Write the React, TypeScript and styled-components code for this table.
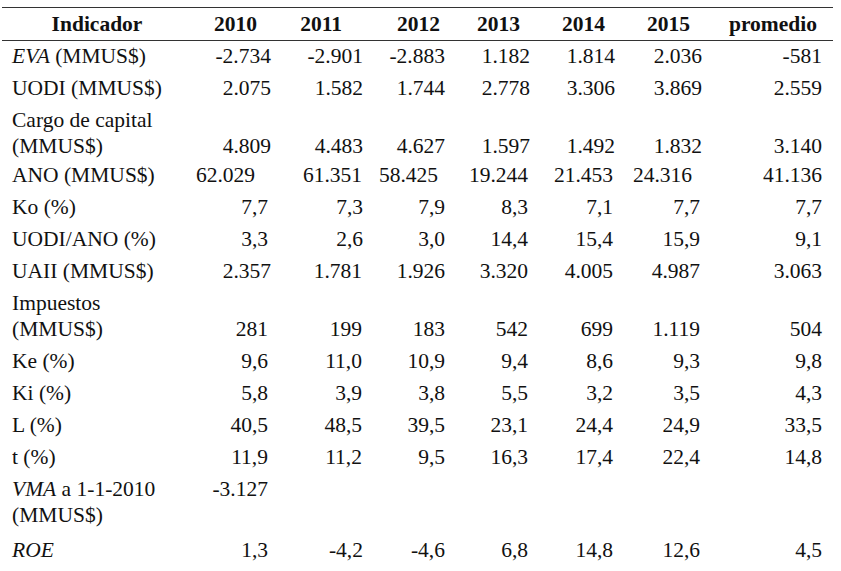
import React, { FC, ReactNode } from 'react';
import styled, { createGlobalStyle } from 'styled-components';

const GlobalStyle = createGlobalStyle`
    html, body {
        margin: 0;
        padding: 0;
        background: #fff;
    }
    body {
        font-family: 'Liberation Serif', 'DejaVu Serif', serif;
        color: #111;
    }
`;

// column widths follow the right edges of the numbers in the source table
const COLUMNS = '190px 79px 92px 82px 85px 85px 87px 131px';

const Table = styled.div`
    width: 831px;
    margin: 7px 0 0 2px;
    font-family: 'Liberation Serif', 'DejaVu Serif', serif;
    font-size: 21.5px;
    line-height: 26px;
`;

const Row = styled.div<{ $pt?: number; $pb?: number; $align?: string }>`
    display: grid;
    grid-template-columns: ${COLUMNS};
    padding: ${(p) => p.$pt ?? 3}px 0 ${(p) => p.$pb ?? 3}px;
    align-items: ${(p) => p.$align ?? 'end'};
`;

const HeadRow = styled(Row)`
    border-top: 1px solid #333;
    border-bottom: 1px solid #333;
    font-weight: bold;
`;

const Label = styled.div`
    padding-left: 10px;
    white-space: nowrap;
`;

const HeadLabel = styled.div`
    text-align: center;
`;

const Cell = styled.div<{ $pad?: number }>`
    text-align: right;
    padding-right: ${(p) => p.$pad ?? 0}px;
    white-space: nowrap;
`;

const Em = styled.i`
    font-style: italic;
`;

type RowData = {
    label: ReactNode;
    values: string[];
    pads?: number[];
    pt?: number;
    pb?: number;
    align?: string;
};

const basePads = [0, 0, 0, 0, 0, 0, 11];

const rows: RowData[] = [
    { label: <><Em>EVA</Em> (MMUS$)</>, values: ['-2.734', '-2.901', '-2.883', '1.182', '1.814', '2.036', '-581'], pt: 2 },
    { label: 'UODI (MMUS$)', values: ['2.075', '1.582', '1.744', '2.778', '3.306', '3.869', '2.559'] },
    { label: <>Cargo de capital<br />(MMUS$)</>, values: ['4.809', '4.483', '4.627', '1.597', '1.492', '1.832', '3.140'], pb: 0 },
    {
        label: 'ANO (MMUS$)',
        values: ['62.029', '61.351', '58.425', '19.244', '21.453', '24.316', '41.136'],
        pads: [16, 1, 7, 2, 2, 10, 11],
    },
    { label: 'Ko (%)', values: ['7,7', '7,3', '7,9', '8,3', '7,1', '7,7', '7,7'], pads: [3, 0, 0, 2, 2, 2, 11] },
    { label: 'UODI/ANO (%)', values: ['3,3', '2,6', '3,0', '14,4', '15,4', '15,9', '9,1'], pads: [3, 0, 0, 2, 2, 2, 11] },
    { label: 'UAII (MMUS$)', values: ['2.357', '1.781', '1.926', '3.320', '4.005', '4.987', '3.063'], pads: [-5, 1, 0, 2, 2, 2, 11] },
    { label: <>Impuestos<br />(MMUS$)</>, values: ['281', '199', '183', '542', '699', '1.119', '504'], pads: [3, 1, 0, 2, 2, 2, 11] },
    { label: 'Ke (%)', values: ['9,6', '11,0', '10,9', '9,4', '8,6', '9,3', '9,8'], pads: [3, 1, 0, 2, 2, 2, 11] },
    { label: 'Ki (%)', values: ['5,8', '3,9', '3,8', '5,5', '3,2', '3,5', '4,3'], pads: [3, 1, 0, 2, 2, 2, 11] },
    { label: 'L (%)', values: ['40,5', '48,5', '39,5', '23,1', '24,4', '24,9', '33,5'], pads: [3, 1, 0, 2, 2, 2, 11] },
    { label: 't (%)', values: ['11,9', '11,2', '9,5', '16,3', '17,4', '22,4', '14,8'], pads: [3, 1, 0, 2, 2, 2, 11] },
    {
        label: <><Em>VMA</Em> a 1-1-2010<br />(MMUS$)</>,
        values: ['-3.127', '', '', '', '', '', ''],
        pads: [3, 0, 0, 0, 0, 0, 11],
        align: 'start',
        pb: 6,
    },
    { label: <Em>ROE</Em>, values: ['1,3', '-4,2', '-4,6', '6,8', '14,8', '12,6', '4,5'], pads: [3, 0, 0, 2, 2, 2, 11] },
];

const headers = ['2010', '2011', '2012', '2013', '2014', '2015', 'promedio'];
const headPads = [14, 21, 5, 10, 10, 12, 16];

const App: FC = () => {
    return (
        <>
            <GlobalStyle />
            <Table>
                <HeadRow>
                    <HeadLabel>Indicador</HeadLabel>
                    {headers.map((h, i) => (
                        <Cell key={h} $pad={headPads[i]}>
                            {h}
                        </Cell>
                    ))}
                </HeadRow>
                {rows.map((row, index) => (
                    <Row key={index} $pt={row.pt} $pb={row.pb} $align={row.align}>
                        <Label>{row.label}</Label>
                        {row.values.map((v, i) => (
                            <Cell key={i} $pad={(row.pads ?? basePads)[i]}>
                                {v}
                            </Cell>
                        ))}
                    </Row>
                ))}
            </Table>
        </>
    );
};

export default App;
